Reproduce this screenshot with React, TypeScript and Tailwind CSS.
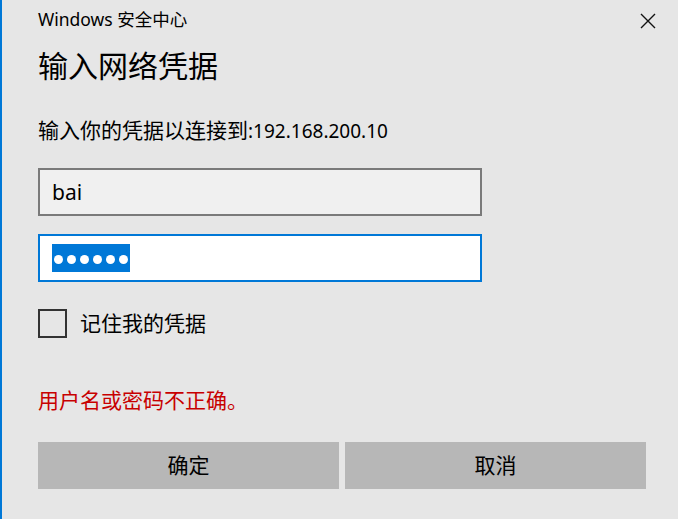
import React from "react";

export default function App() {
  const font = { fontFamily: '"Noto Sans", "Noto Sans CJK SC", sans-serif' };
  return (
    <div
      className="w-[678px] h-[519px] bg-[#e6e6e6] border-l-2 border-[#0078d7] flex flex-col pl-[36px] pr-[32px] text-black overflow-hidden"
      style={font}
    >
      <div className="h-[40px] flex items-center justify-between mr-[-10px]">
        <span className="text-[17.5px] leading-none">Windows 安全中心</span>
        <svg width="16" height="16" viewBox="0 0 16 16" className="mt-[1px]">
          <path d="M1 1 L15 15 M15 1 L1 15" stroke="#111" strokeWidth="1.4" fill="none" />
        </svg>
      </div>
      <div className="mt-[6px] h-[40px] flex items-center">
        <span className="text-[30px] leading-none">输入网络凭据</span>
      </div>
      <div className="mt-[24px] h-[40px] flex items-center">
        <span className="text-[21px] leading-none">
          输入你的凭据以连接到<span className="text-[19px]">:192.168.200.10</span>
        </span>
      </div>
      <div className="mt-[18px] w-[444px] h-[48px] border-2 border-[#7a7a7a] bg-[#f0f0f0] flex items-center pl-[12px]">
        <span className="text-[21px] leading-none">bai</span>
      </div>
      <div className="mt-[18px] w-[444px] h-[48px] border-2 border-[#0078d7] bg-white flex items-center pl-[12px]">
        <div className="h-[28px] w-[78px] bg-[#0078d7] flex items-center gap-[4px] pl-[2px]">
          {[0, 1, 2, 3, 4, 5].map((i) => (
            <span key={i} className="w-[9px] h-[9px] rounded-full bg-white mt-[3px]" />
          ))}
        </div>
      </div>
      <div className="mt-[27px] h-[29px] flex items-center gap-[13px]">
        <div className="w-[29px] h-[29px] border-2 border-[#333333] bg-transparent" />
        <span className="text-[21px] leading-none">记住我的凭据</span>
      </div>
      <div className="mt-[42px] h-[40px] flex items-center">
        <span className="text-[21px] leading-none text-[#c80000]">用户名或密码不正确。</span>
      </div>
      <div className="mt-[22px] flex gap-[6px]">
        <button className="w-[301px] h-[47px] bg-[#b7b7b7] flex items-center justify-center text-[21px] leading-none">
          确定
        </button>
        <button className="w-[301px] h-[47px] bg-[#b7b7b7] flex items-center justify-center text-[21px] leading-none">
          取消
        </button>
      </div>
    </div>
  );
}
